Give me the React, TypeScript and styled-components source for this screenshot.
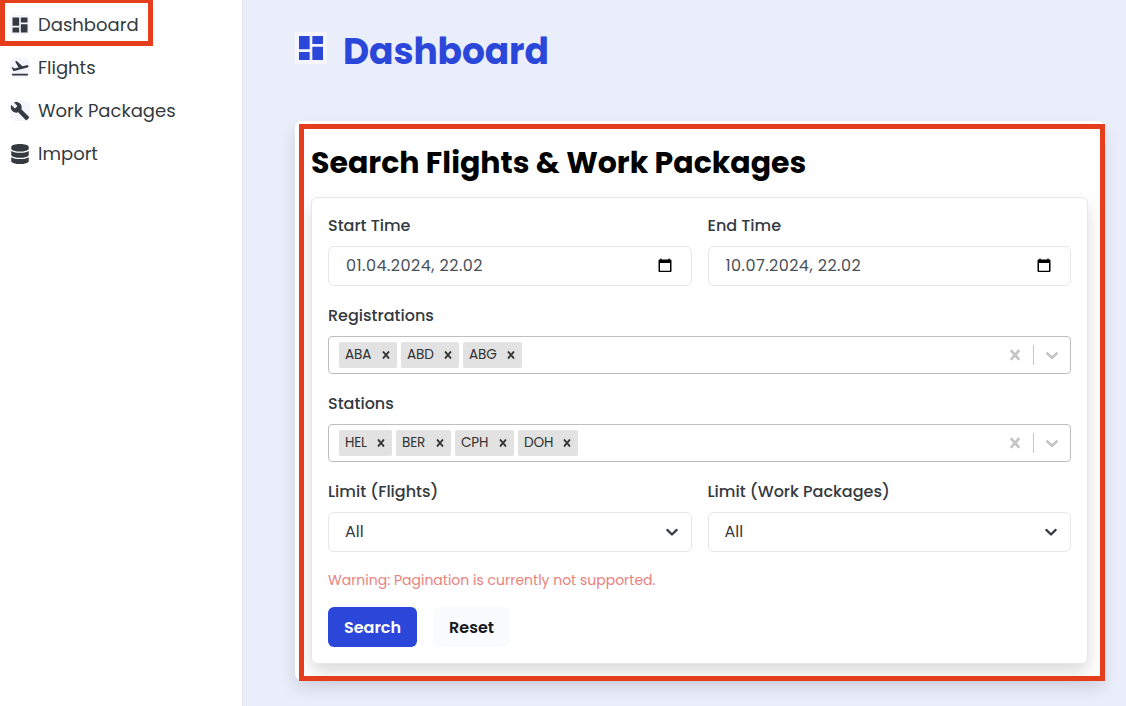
import React from 'react';
import styled, { createGlobalStyle, css } from 'styled-components';
import { MdDashboard, MdFlightTakeoff, MdBuild } from 'react-icons/md';
import { FaDatabase } from 'react-icons/fa';

const GlobalStyle = createGlobalStyle`
  *, *::before, *::after { box-sizing: border-box; }
  html, body { margin: 0; padding: 0; height: 100%; overflow: hidden; }
  body {
    font-family: Poppins, Inter, 'Liberation Sans', sans-serif;
    font-size: 16px;
    line-height: 24px;
    color: #343a40;
    background: #ffffff;
  }
`;

const accent = '#2b47d9';
const marker = '#e53e1c';

/* Letter spacing in px, for the few texts that are tracked. */
type Tracked = { $track?: number };
const tracking = css<Tracked>`
  letter-spacing: ${({ $track = 0 }) => $track}px;
  white-space: nowrap;
`;

const Page = styled.div`
  display: flex;
  width: 100%;
  height: 100vh;
  min-height: 706px;
`;

const Sidebar = styled.nav`
  position: relative;
  flex: 0 0 243px;
  padding: 3px 0 0 10px;
  background: #ffffff;
  border-right: 1px solid #e3e6f0;
`;

const NavItem = styled.a`
  display: flex;
  align-items: center;
  gap: 8px;
  height: 43px;
  font-size: 18px;
  line-height: 27px;
`;

const NavText = styled.span<Tracked>`
  ${tracking}
`;

const NavIcon = styled.span<{ $plain?: boolean }>`
  display: flex;
  justify-content: center;
  width: 20px;
  height: 20px;
  font-size: 20px;
  border-radius: 5px;
  background: ${({ $plain }) => ($plain ? 'transparent' : '#f5f5ff')};
`;

const NavMarker = styled.div`
  position: absolute;
  left: 0;
  top: -2px;
  width: 153px;
  height: 48px;
  border: 5px solid ${marker};
`;

const Main = styled.main`
  flex: 1;
  padding: 28px 22px 0 52px;
  background: #eaeefb;
`;

const PageHeader = styled.header`
  display: flex;
  align-items: center;
  gap: 16px;
  height: 46px;
  margin-bottom: 47px;
  color: ${accent};
`;

const HeaderIcon = styled.span`
  display: flex;
  width: 32px;
  height: 32px;
  margin-bottom: 6px;
  font-size: 32px;
  background: #f5f5ff;
`;

const PageTitle = styled.h1<Tracked>`
  margin: 0;
  padding-top: 2px;
  font-size: 36px;
  line-height: 46px;
  font-weight: 700;
  ${tracking}
`;

const Card = styled.section`
  position: relative;
  width: 809px;
  height: 559px;
  padding: 20px 16px 16px;
  border-radius: 6px;
  background: #ffffff;
  box-shadow: 0 8px 16px rgba(0, 0, 0, 0.12);
`;

const CardMarker = styled.div`
  position: absolute;
  left: 4px;
  top: 3px;
  width: 806px;
  height: 557px;
  border: 5px solid ${marker};
  pointer-events: none;
`;

const CardTitle = styled.h2<Tracked>`
  margin: 0 0 12px;
  font-size: 30px;
  line-height: 44px;
  font-weight: 700;
  color: #000000;
  ${tracking}
`;

const Form = styled.form`
  display: flex;
  flex-direction: column;
  gap: 18px;
  height: 467px;
  padding: 16px;
  border: 1px solid #e6e7e9;
  border-radius: 6px;
  background: #ffffff;
  box-shadow: 0 8px 16px rgba(0, 0, 0, 0.14);
`;

const FieldRow = styled.div`
  display: grid;
  grid-template-columns: 1fr 1fr;
  gap: 16px;
`;

const Field = styled.div`
  display: flex;
  flex-direction: column;
  gap: 8px;
`;

const Label = styled.label<Tracked>`
  font-weight: 500;
  font-size: 16px;
  line-height: 24px;
  ${tracking}
`;

const Control = styled.div`
  display: flex;
  align-items: center;
  justify-content: space-between;
  height: 40px;
  padding: 0 11px 0 16px;
  border: 1px solid #e6e7e9;
  border-radius: 6px;
`;

const DateControl = styled(Control)`
  padding: 0 18px 0 17px;
  color: #495057;
`;

const ControlText = styled.span<Tracked>`
  font-size: 16px;
  ${tracking}
`;

const MultiSelect = styled.div`
  display: flex;
  align-items: center;
  height: 38px;
  padding-left: 10px;
  border: 1px solid #bfbfbf;
  border-radius: 4px;
`;

const Chips = styled.div`
  display: flex;
  flex: 1;
  gap: 4px;
`;

const Chip = styled.span<{ $width: number }>`
  display: flex;
  align-items: center;
  justify-content: space-between;
  width: ${({ $width }) => $width}px;
  height: 26px;
  padding: 0 4px 0 6px;
  border-radius: 2px;
  background: #e2e2e2;
  color: #333333;
  font-size: 13.6px;
`;

const ChipText = styled.span<Tracked>`
  ${tracking}
`;

const Divider = styled.span`
  width: 1px;
  height: 20px;
  margin: 0 8px;
  background: #c8c8c8;
`;

const Indicator = styled.span`
  display: flex;
  color: #c4c4c4;
  &:last-child { margin-right: 8px; }
`;

const Warning = styled.p<Tracked>`
  margin: 0 0 -2px;
  font-size: 14px;
  line-height: 21px;
  color: #e9827c;
  ${tracking}
`;

const Actions = styled.div`
  display: flex;
  gap: 16px;
`;

const Button = styled.button<Tracked & { $primary?: boolean; $width: number }>`
  width: ${({ $width }) => $width}px;
  height: 40px;
  padding: 2px 0 0;
  border: 0;
  border-radius: 6px;
  font: 600 16px/24px Poppins, Inter, 'Liberation Sans', sans-serif;
  color: ${({ $primary }) => ($primary ? '#ffffff' : '#16191d')};
  background: ${({ $primary }) => ($primary ? accent : '#fafbfe')};
  ${tracking}
`;

const crossPath =
  'M14.348 14.849c-0.469 0.469-1.229 0.469-1.697 0l-2.651-3.030-2.651 3.029c-0.469 0.469-1.229 0.469-1.697 0-0.469-0.469-0.469-1.229 0-1.697l2.758-3.15-2.759-3.152c-0.469-0.469-0.469-1.228 0-1.697s1.228-0.469 1.697 0l2.652 3.031 2.651-3.031c0.469-0.469 1.228-0.469 1.697 0s0.469 1.229 0 1.697l-2.758 3.152 2.758 3.15c0.469 0.469 0.469 1.229 0 1.698z';
const chevronPath =
  'M4.516 7.548c0.436-0.446 1.043-0.481 1.576 0l3.908 3.747 3.908-3.747c0.533-0.481 1.141-0.446 1.574 0 0.436 0.445 0.408 1.197 0 1.615-0.406 0.418-4.695 4.502-4.695 4.502-0.217 0.223-0.502 0.335-0.787 0.335s-0.57-0.112-0.789-0.335c0 0-4.287-4.084-4.695-4.502s-0.436-1.17 0-1.615z';

const Cross = ({ size }: { size: number }) => (
  <svg width={size} height={size} viewBox="0 0 20 20" fill="currentColor" stroke="currentColor" strokeWidth="0.4"><path d={crossPath} /></svg>
);

const Chevron = () => (
  <svg width="20" height="20" viewBox="0 0 20 20" fill="currentColor" stroke="currentColor" strokeWidth="0.4"><path d={chevronPath} /></svg>
);

const SelectArrow = () => (
  <svg width="16" height="12" viewBox="0 0 16 12" fill="none" stroke="#343a40" strokeWidth="2.200" strokeLinecap="round" strokeLinejoin="round">
    <path d="m3.300 3.900 4.700 4.600 4.700-4.600" />
  </svg>
);

const CalendarIcon = () => (
  <svg width="16" height="16" viewBox="0 0 16 16" fill="none">
    <path d="M4 .5v2M12 .5v2" stroke="#000000" strokeWidth="1.300" />
    <path fillRule="evenodd" fill="#000000" d="M2.600 1.400h10.800c.6 0 1.100.5 1.100 1.100v10.400c0 .6-.5 1.100-1.100 1.100H2.600c-.6 0-1.100-.5-1.100-1.100V2.500c0-.6.5-1.100 1.100-1.100zM3 5v7.700h10V5z" />
  </svg>
);

type ChipData = { text: string; width: number };

const registrations: ChipData[] = [
  { text: 'ABA', width: 58 },
  { text: 'ABD', width: 58 },
  { text: 'ABG', width: 59 },
];

const stations: ChipData[] = [
  { text: 'HEL', width: 53 },
  { text: 'BER', width: 55 },
  { text: 'CPH', width: 59 },
  { text: 'DOH', width: 60 },
];

const TagSelect = ({ items }: { items: ChipData[] }) => (
  <MultiSelect>
    <Chips>
      {items.map((item) => (
        <Chip key={item.text} $width={item.width}>
          <ChipText $track={-0.15}>{item.text}</ChipText>
          <Cross size={14} />
        </Chip>
      ))}
    </Chips>
    <Indicator><Cross size={20} /></Indicator>
    <Divider />
    <Indicator><Chevron /></Indicator>
  </MultiSelect>
);

export default function App() {
  return (
    <>
      <GlobalStyle />
      <Page>
        <Sidebar>
          <NavItem><NavIcon><MdDashboard /></NavIcon><NavText>Dashboard</NavText></NavItem>
          <NavItem><NavIcon><MdFlightTakeoff /></NavIcon><NavText>Flights</NavText></NavItem>
          <NavItem><NavIcon><MdBuild /></NavIcon><NavText>Work Packages</NavText></NavItem>
          <NavItem><NavIcon $plain><FaDatabase /></NavIcon><NavText>Import</NavText></NavItem>
          <NavMarker />
        </Sidebar>
        <Main>
          <PageHeader>
            <HeaderIcon><MdDashboard /></HeaderIcon>
            <PageTitle $track={-0.1}>Dashboard</PageTitle>
          </PageHeader>
          <Card>
            <CardTitle>Search Flights &amp; Work Packages</CardTitle>
            <Form>
              <FieldRow>
                <Field>
                  <Label>Start Time</Label>
                  <DateControl><ControlText $track={0.47}>01.04.2024, 22.02</ControlText><CalendarIcon /></DateControl>
                </Field>
                <Field>
                  <Label>End Time</Label>
                  <DateControl><ControlText $track={0.47}>10.07.2024, 22.02</ControlText><CalendarIcon /></DateControl>
                </Field>
              </FieldRow>
              <Field>
                <Label>Registrations</Label>
                <TagSelect items={registrations} />
              </Field>
              <Field>
                <Label>Stations</Label>
                <TagSelect items={stations} />
              </Field>
              <FieldRow>
                <Field>
                  <Label>Limit (Flights)</Label>
                  <Control><ControlText>All</ControlText><SelectArrow /></Control>
                </Field>
                <Field>
                  <Label>Limit (Work Packages)</Label>
                  <Control><ControlText>All</ControlText><SelectArrow /></Control>
                </Field>
              </FieldRow>
              <Warning>Warning: Pagination is currently not supported.</Warning>
              <Actions>
                <Button type="button" $primary $width={89}>Search</Button>
                <Button type="button" $width={77}>Reset</Button>
              </Actions>
            </Form>
            <CardMarker />
          </Card>
        </Main>
      </Page>
    </>
  );
}
